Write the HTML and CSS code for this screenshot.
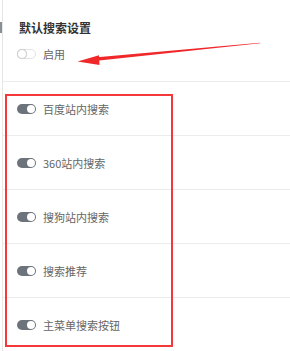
FILE: index.html
```html
<!DOCTYPE html>
<html lang="zh">
<head>
<meta charset="utf-8">
<link rel="stylesheet" href="styles.css">
</head>
<body>
<div class="page">
  <div class="panel">
    <section class="header">
      <h2 class="title">默认搜索设置</h2>
      <div class="item">
        <span class="toggle off"><span class="knob"></span></span>
        <span class="label">启用</span>
      </div>
    </section>
    <div class="row"><div class="item"><span class="toggle on"><span class="knob"></span></span><span class="label">百度站内搜索</span></div></div>
    <div class="row"><div class="item"><span class="toggle on"><span class="knob"></span></span><span class="label">360站内搜索</span></div></div>
    <div class="row"><div class="item"><span class="toggle on"><span class="knob"></span></span><span class="label">搜狗站内搜索</span></div></div>
    <div class="row"><div class="item"><span class="toggle on"><span class="knob"></span></span><span class="label">搜索推荐</span></div></div>
    <div class="row"><div class="item"><span class="toggle on"><span class="knob"></span></span><span class="label">主菜单搜索按钮</span></div></div>
  </div>
  <span class="tab-mark"></span>
  <div class="highlight"></div>
  <svg class="arrow" width="290" height="351" viewBox="0 0 290 351">
    <polygon points="260,42.7 97,57.2 97,60.8 260,43.3" fill="#f0282a"/>
    <polygon points="77.5,61.6 99,55.2 99.5,65" fill="#f0282a"/>
  </svg>
</div>
</body>
</html>
```
FILE: styles.css
```css
html, body {
  margin: 0;
  padding: 0;
  background: #fff;
}
.page {
  position: relative;
  width: 290px;
  height: 351px;
  overflow: hidden;
  font-family: "Noto Sans CJK SC", "Noto Sans", sans-serif;
}
.panel {
  margin-left: 2px;
  border-left: 1px solid #e6e6e6;
  height: 351px;
}
.header {
  height: 82px;
  box-sizing: border-box;
  padding: 20px 0 0 14px;
  border-bottom: 1px solid #ececec;
}
.title {
  margin: 0 0 10px 2px;
  font-size: 12px;
  line-height: 16px;
  font-weight: bold;
  color: #333;
}
.row {
  height: 53px;
  border-bottom: 1px solid #ececec;
  display: flex;
  align-items: center;
  padding-left: 14px;
}
.item {
  display: flex;
  align-items: center;
  gap: 7px;
  height: 16px;
}
.label {
  font-size: 11px;
  line-height: 16px;
  color: #666;
}
.toggle {
  position: relative;
  display: inline-block;
  width: 19px;
  height: 10px;
  border-radius: 5px;
  box-sizing: border-box;
}
.toggle.on {
  background: #6c737a;
}
.toggle.off {
  background: #fff;
  border: 1px solid #e2e2e2;
}
.knob {
  position: absolute;
  width: 8px;
  height: 8px;
  border-radius: 50%;
  background: #fff;
  top: 1px;
}
.toggle.on .knob {
  right: 1px;
}
.toggle.off .knob {
  left: -1px;
  top: -1px;
  width: 10px;
  height: 10px;
  box-sizing: border-box;
  border: 1px solid #cfcfcf;
  box-shadow: 0 0 1px rgba(0,0,0,0.15);
}
.tab-mark {
  position: absolute;
  left: 0;
  top: 22px;
  width: 2px;
  height: 11px;
  background: #8a8f94;
}
.highlight {
  position: absolute;
  left: 5px;
  top: 94px;
  width: 168px;
  height: 253px;
  box-sizing: border-box;
  border: 2px solid #f5393b;
}
.arrow {
  position: absolute;
  left: 0;
  top: 0;
}
```
